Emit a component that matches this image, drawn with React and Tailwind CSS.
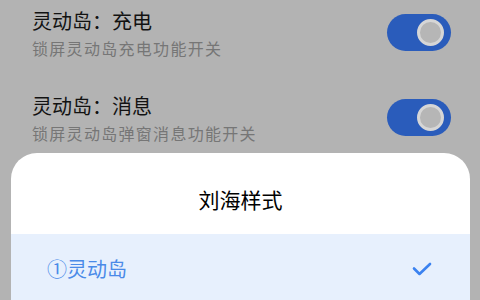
import React from "react";

function Toggle() {
  return (
    <div className="w-[64px] h-[37px] rounded-full bg-[#2a5cbb] flex items-center justify-end pr-[7px]">
      <div className="w-[27px] h-[27px] rounded-full bg-[#b6b6b6] border-[3px] border-[#d6d6d6]" />
    </div>
  );
}

function Row({ title, sub }) {
  return (
    <div className="flex items-center justify-between pl-[32px] pr-[29px]">
      <div className="flex flex-col">
        <div className="text-[20px] leading-[28px] font-normal text-[#121212]">{title}</div>
        <div className="text-[16px] leading-[20px] tracking-[1.3px] text-[#767676] mt-[3px]">{sub}</div>
      </div>
      <Toggle />
    </div>
  );
}

export default function App() {
  return (
    <div
      className="relative w-[480px] h-[300px] overflow-hidden bg-[#b3b3b3]"
      style={{ fontFamily: '"Noto Sans CJK SC", "Noto Sans", sans-serif' }}
    >
      <div className="flex flex-col gap-[34px] pt-[7px]">
        <Row title="灵动岛：充电" sub="锁屏灵动岛充电功能开关" />
        <Row title="灵动岛：消息" sub="锁屏灵动岛弹窗消息功能开关" />
      </div>
      <div className="absolute left-[11px] top-[153px] w-[459px] h-[200px] bg-white rounded-t-[26px] overflow-hidden flex flex-col">
        <div className="h-[81px] pt-[32px] text-center text-[21px] leading-[28px] font-normal text-[#000000]">刘海样式</div>
        <div className="h-[70px] bg-[#e7f0fd] flex items-center justify-between pl-[36px] pr-[38px]">
          <span className="text-[20px] leading-[28px] font-normal text-[#4a8ae8]">①灵动岛</span>
          <svg width="20" height="14" viewBox="0 0 20 14" fill="none">
            <path d="M2 6.5 L7.5 12 L18 2" stroke="#3b82f0" strokeWidth="2.6" strokeLinecap="round" strokeLinejoin="round" />
          </svg>
        </div>
      </div>
    </div>
  );
}
